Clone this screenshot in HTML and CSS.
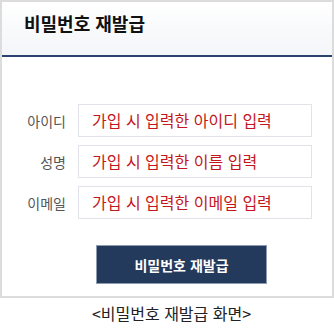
FILE: index.html
```html
<!DOCTYPE html>
<html lang="ko">
<head>
  <meta charset="UTF-8" />
  <meta name="viewport" content="width=device-width, initial-scale=1.0" />
  <title>비밀번호 재발급</title>
  <link rel="stylesheet" href="styles.css">
</head>
<body>
  <div class="frame">
    <div class="header">
      <h1>비밀번호 재발급</h1>
    </div>

    <!-- 재발급 폼 -->
    <form class="reissue-form">
      <div class="row">
        <label for="userId">아이디</label>
        <input type="text" id="userId" placeholder="가입 시 입력한 아이디 입력" />
      </div>
      <div class="row">
        <label for="userName">성명</label>
        <input type="text" id="userName" placeholder="가입 시 입력한 이름 입력" />
      </div>
      <div class="row">
        <label for="userEmail">이메일</label>
        <input type="text" id="userEmail" placeholder="가입 시 입력한 이메일 입력" />
      </div>

      <button type="submit">비밀번호 재발급</button>
    </form>
  </div>

  <p class="caption">&lt;비밀번호 재발급 화면&gt;</p>
</body>
</html>
```

FILE: styles.css
```css
body {
  margin: 0;
  background-color: #ffffff;
  font-family: "Noto Sans CJK KR", "Noto Sans", sans-serif;
}

.frame {
  width: 334px;
  height: 298px;
  box-sizing: border-box;
  border: 2px solid #dcdcdc;
  background-color: #ffffff;
}

.header {
  height: 53px;
  padding-left: 22px;
  background: linear-gradient(#ffffff, #f3f5f8);
  border-bottom: 2px solid #2b4270;
}

.header h1 {
  margin: 0;
  padding-top: 6px;
  font-size: 18px;
  line-height: 30px;
  font-weight: 700;
  color: #111111;
}

.reissue-form {
  padding-top: 47px;
}

.row {
  display: flex;
  align-items: center;
  margin-bottom: 8px;
}

.row label {
  width: 64px;
  margin-right: 12px;
  text-align: right;
  font-size: 14px;
  color: #555555;
}

.row input {
  width: 234px;
  height: 33px;
  box-sizing: border-box;
  padding: 0 0 2px 13px;
  border: 1px solid #e2e3ea;
  font-family: inherit;
  font-size: 16px;
  outline: none;
}

.row input::placeholder {
  color: #c4161c;
  opacity: 1;
}

button {
  display: block;
  width: 171px;
  height: 39px;
  margin: 26px 0 0 94px;
  border: 1px solid #8d9bb2;
  background-color: #243a5c;
  color: #ffffff;
  font-family: inherit;
  font-size: 14px;
  font-weight: 700;
  cursor: pointer;
}

.caption {
  margin: 5px 0 0;
  padding-left: 9px;
  text-align: center;
  font-size: 16px;
  line-height: 20px;
  color: #222222;
}
```
